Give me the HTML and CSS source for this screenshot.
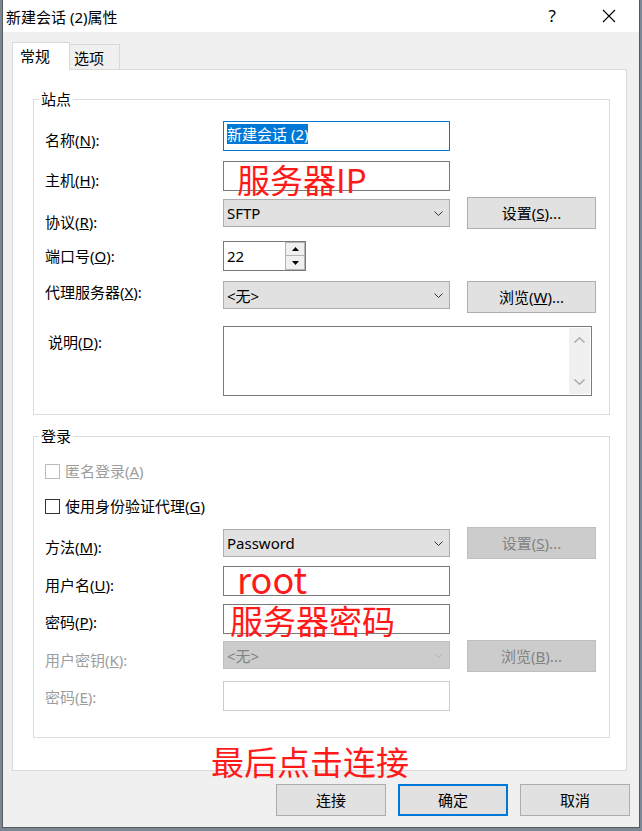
FILE: index.html
```html
<!DOCTYPE html>
<html lang="zh-CN">
<head>
    <meta charset="UTF-8">
    <meta name="viewport" content="width=device-width, initial-scale=1.0">
    <title>新建会话 (2)属性</title>
<link rel="stylesheet" href="styles.css">
</head>
<body>
<div class="window">
    <div class="titlebar">
        <span class="title">新建会话 (2)属性</span>
        <span class="help">?</span>
        <svg class="close" width="14" height="14" viewBox="0 0 14 14"><path d="M1 1L13 13M13 1L1 13" stroke="#000" stroke-width="1.1" fill="none"/></svg>
    </div>

    <div class="tabs">
        <div class="tab active">常规</div>
        <div class="tab">选项</div>
    </div>

    <div class="panel">
        <!-- 站点 -->
        <div class="group">
            <div class="group-title">站点</div>

            <div class="row row-name">
                <label>名称(<u>N</u>):</label>
                <div class="edit focus"><span class="sel">新建会话 (2)</span></div>
            </div>
            <div class="row row-host">
                <label>主机(<u>H</u>):</label>
                <div class="edit"></div>
            </div>
            <div class="row row-proto">
                <label>协议(<u>R</u>):</label>
                <div class="combo"><span>SFTP</span><svg class="chev" width="9" height="5" viewBox="0 0 9 5"><path d="M0.5 0.5L4.5 4.5L8.5 0.5" fill="none" stroke="#333"/></svg></div>
                <div class="btn">设置(<u>S</u>)...</div>
            </div>
            <div class="row row-port">
                <label>端口号(<u>O</u>):</label>
                <div class="spin">
                    <span class="spin-text">22</span>
                    <div class="spin-btns">
                        <div class="spin-btn"><svg width="7" height="4" viewBox="0 0 7 4"><path d="M0 4L3.5 0L7 4Z"/></svg></div>
                        <div class="spin-btn"><svg width="7" height="4" viewBox="0 0 7 4"><path d="M0 0L3.5 4L7 0Z"/></svg></div>
                    </div>
                </div>
            </div>
            <div class="row row-proxy">
                <label>代理服务器(<u>X</u>):</label>
                <div class="combo"><span>&lt;无&gt;</span><svg class="chev" width="9" height="5" viewBox="0 0 9 5"><path d="M0.5 0.5L4.5 4.5L8.5 0.5" fill="none" stroke="#333"/></svg></div>
                <div class="btn">浏览(<u>W</u>)...</div>
            </div>
            <div class="row row-desc">
                <label>说明(<u>D</u>):</label>
                <div class="memo">
                    <div class="vscroll">
                        <svg width="11" height="6" viewBox="0 0 11 6"><path d="M0.5 5.5L5.5 0.8L10.5 5.5" fill="none" stroke="#a6a6a6" stroke-width="1.4"/></svg>
                        <svg width="11" height="6" viewBox="0 0 11 6"><path d="M0.5 0.5L5.5 5.2L10.5 0.5" fill="none" stroke="#a6a6a6" stroke-width="1.4"/></svg>
                    </div>
                </div>
            </div>
        </div>

        <!-- 登录 -->
        <div class="group group-login">
            <div class="group-title">登录</div>

            <div class="check-row row-anon disabled">
                <span class="box"></span>
                <span>匿名登录(<u>A</u>)</span>
            </div>
            <div class="check-row row-agent">
                <span class="box"></span>
                <span>使用身份验证代理(<u>G</u>)</span>
            </div>
            <div class="row row-method">
                <label>方法(<u>M</u>):</label>
                <div class="combo"><span>Password</span><svg class="chev" width="9" height="5" viewBox="0 0 9 5"><path d="M0.5 0.5L4.5 4.5L8.5 0.5" fill="none" stroke="#333"/></svg></div>
                <div class="btn disabled">设置(<u>S</u>)...</div>
            </div>
            <div class="row row-user">
                <label>用户名(<u>U</u>):</label>
                <div class="edit"></div>
            </div>
            <div class="row row-pass">
                <label>密码(<u>P</u>):</label>
                <div class="edit"></div>
            </div>
            <div class="row row-key">
                <label class="disabled">用户密钥(<u>K</u>):</label>
                <div class="combo disabled"><span>&lt;无&gt;</span><svg class="chev" width="9" height="5" viewBox="0 0 9 5"><path d="M0.5 0.5L4.5 4.5L8.5 0.5" fill="none" stroke="#b4b4b4"/></svg></div>
                <div class="btn disabled">浏览(<u>B</u>)...</div>
            </div>
            <div class="row row-passe">
                <label class="disabled">密码(<u>E</u>):</label>
                <div class="edit disabled"></div>
            </div>
        </div>
    </div>

    <div class="footer">
        <div class="btn wide">连接</div>
        <div class="btn wide default">确定</div>
        <div class="btn wide">取消</div>
    </div>

    <!-- red notes drawn over the screenshot -->
    <div class="note note-host">服务器IP</div>
    <div class="note note-user">root</div>
    <div class="note note-pass">服务器密码</div>
    <div class="note note-connect">最后点击连接</div>
</div>
</body>
</html>
```

FILE: styles.css
```css
* {
    box-sizing: border-box;
}

body {
    margin: 0;
    background: #7b8794;
    font-family: "Noto Sans", "Noto Sans CJK SC", sans-serif;
    font-size: 15px;
    color: #000;
}

.window {
    position: relative;
    width: 638px;
    height: 828px;
    margin-left: 2px;
    background: #f0f0f0;
    border: 1px solid #5a5a5a;
    border-top: none;
    overflow: hidden;
}

/* title bar */
.titlebar {
    display: flex;
    align-items: center;
    height: 32px;
    padding: 0 23px 0 3px;
    background: #fff;
}

.title {
    margin-top: 2px;
    line-height: 20px;
}

.help {
    margin-left: auto;
    margin-right: 46px;
    font-size: 17px;
    line-height: 20px;
}

.close {
    display: block;
}

/* tabs */
.tabs {
    display: flex;
    align-items: flex-end;
    height: 27px;
    margin: 10px 0 0 9px;
}

.tab {
    height: 25px;
    width: 50px;
    padding: 3px 0 0 4px;
    line-height: 20px;
    border-top: 1px solid #d9d9d9;
    border-right: 1px solid #d9d9d9;
}

.tab.active {
    position: relative;
    z-index: 1;
    height: 28px;
    width: 58px;
    margin-bottom: -1px;
    padding-left: 7px;
    background: #fff;
    border-left: 1px solid #d9d9d9;
}

.panel {
    margin: 0 12px 0 9px;
    padding: 29px 16px 32px 20px;
    background: #fff;
    border: 1px solid #d9d9d9;
}

/* group boxes */
.group {
    border: 1px solid #dcdcdc;
    padding-bottom: 18px;
}

.group-login {
    margin-top: 21px;
    padding-bottom: 26px;
}

.group-title {
    width: max-content;
    margin: -11px 0 0 5px;
    padding: 0 2px;
    line-height: 20px;
    background: #fff;
}

.row {
    display: grid;
    grid-template-columns: 161px 227px 129px;
    column-gap: 17px;
    align-items: start;
    padding-left: 11px;
}

.row label {
    line-height: 20px;
}

.disabled,
.row label.disabled {
    color: #9d9d9d;
}

/* controls */
.edit {
    display: flex;
    align-items: center;
    height: 30px;
    padding: 0 3px;
    background: #fff;
    border: 1px solid #7a7a7a;
}

.edit.focus {
    border-color: #0078d7;
}

.edit.disabled {
    border-color: #cccccc;
}

.sel {
    margin-bottom: 4px;
    line-height: 20px;
    background: #0078d7;
    color: #fff;
}

.combo {
    display: flex;
    align-items: center;
    justify-content: space-between;
    height: 28px;
    padding: 0 6px 0 3px;
    background: #e1e1e1;
    border: 1px solid #adadad;
}

.combo.disabled {
    background: #cccccc;
    border-color: #bfbfbf;
    color: #838383;
}

.chev {
    display: block;
}

.btn {
    height: 32px;
    line-height: 30px;
    text-align: center;
    background: #e1e1e1;
    border: 1px solid #adadad;
}

.btn.disabled {
    background: #cccccc;
    border-color: #bfbfbf;
    color: #838383;
}

.spin {
    display: flex;
    width: 83px;
    height: 30px;
    background: #fff;
    border: 1px solid #7a7a7a;
}

.spin-text {
    flex: 1;
    padding-left: 3px;
    line-height: 28px;
}

.spin-btns {
    display: flex;
    flex-direction: column;
    width: 20px;
}

.spin-btn {
    display: flex;
    align-items: center;
    justify-content: center;
    height: 14px;
    background: #f0f0f0;
    border: 1px solid #b4b4b4;
}

.spin-btn + .spin-btn {
    border-top: none;
}

.spin-btn svg {
    display: block;
}

.memo {
    grid-column: 2 / 4;
    display: flex;
    justify-content: flex-end;
    width: 369px;
    height: 70px;
    background: #fff;
    border: 1px solid #7a7a7a;
}

.vscroll {
    display: flex;
    flex-direction: column;
    justify-content: space-between;
    align-items: center;
    width: 21px;
    margin: 1px 1px 1px 0;
    padding: 9px 0 9px;
    background: #f0f0f0;
}

.vscroll svg {
    display: block;
}

.check-row {
    display: flex;
    align-items: center;
    gap: 5px;
    height: 20px;
    padding-left: 11px;
    line-height: 20px;
}

.box {
    width: 15px;
    height: 15px;
    background: #fff;
    border: 1px solid #333;
}

.check-row.disabled .box {
    border-color: #bcbcbc;
}

/* row spacing, taken from the dialog */
.row-name { margin-top: 12px; }
.row-name label { margin-top: 9px; }

.row-host { margin-top: 10px; }
.row-host label { margin-top: 9px; }

.row-proto { margin-top: 6px; }
.row-proto label { margin-top: 15px; }
.row-proto .combo { margin-top: 2px; }

.row-port { margin-top: 9px; }
.row-port label { margin-top: 5px; }

.row-proxy { margin-top: 10px; }
.row-proxy label { margin-top: 1px; }

.row-desc { margin-top: 13px; }
.row-desc label { margin-top: 6px; padding-left: 3px; }

.row-anon { margin-top: 15px; }
.row-agent { margin-top: 15px; }

.row-method { margin-top: 11px; }
.row-method label { margin-top: 10px; }
.row-method .combo { margin-top: 2px; }

.row-user { margin-top: 7px; }
.row-user label { margin-top: 9px; }

.row-pass { margin-top: 8px; }
.row-pass label { margin-top: 8px; }

.row-key { margin-top: 6px; }
.row-key label { margin-top: 10px; }
.row-key .combo { margin-top: 1px; }

.row-passe { margin-top: 9px; }
.row-passe label { margin-top: 6px; }

/* bottom buttons */
.footer {
    display: flex;
    justify-content: flex-end;
    gap: 12px;
    margin-top: 13px;
    padding-right: 9px;
}

.btn.wide {
    width: 110px;
}

.btn.default {
    border: 2px solid #0078d7;
    line-height: 28px;
}

/* red annotations */
.note {
    position: absolute;
    font-family: "Noto Sans CJK SC", "Noto Sans", sans-serif;
    font-size: 33px;
    line-height: 33px;
    color: #ff1a1a;
    white-space: nowrap;
}

.note-host { left: 234px; top: 163px; }
.note-user { left: 234px; top: 562px; font-size: 36px; }
.note-pass { left: 227px; top: 604px; }
.note-connect { left: 208px; top: 745px; }
```
